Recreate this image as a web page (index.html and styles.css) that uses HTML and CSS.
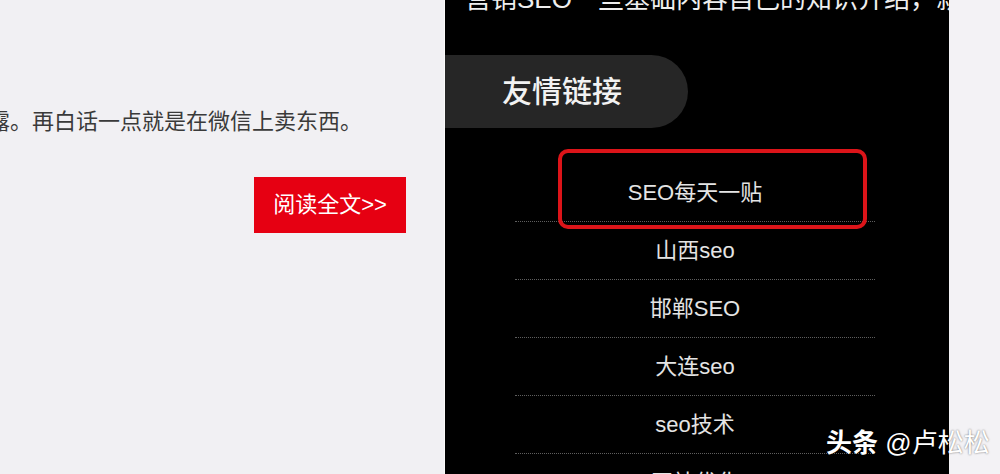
FILE: index.html
```html
<!DOCTYPE html>
<html lang="zh-CN">
<head>
    <meta charset="UTF-8">
    <meta name="viewport" content="width=device-width, initial-scale=1.0">
    <title>友情链接</title>
    <link rel="stylesheet" href="styles.css">
</head>
<body>
<section class="article">
    <p class="excerpt">露。再白话一点就是在微信上卖东西。</p>
    <a href="#" class="read-more">阅读全文&gt;&gt;</a>
</section>

<aside class="sidebar">
    <p class="top-line">营销SEO一些基础内容自己的知识介绍，就是从</p>
    <h2 class="pill">友情链接</h2>
    <ul class="links">
        <li class="marked">SEO每天一贴</li>
        <li>山西seo</li>
        <li>邯郸SEO</li>
        <li>大连seo</li>
        <li>seo技术</li>
        <li>网站优化</li>
    </ul>
</aside>

<div class="edge"></div>

<div class="watermark"><b>头条</b> @卢松松</div>
</body>
</html>
```

FILE: styles.css
```css
* {
    margin: 0;
    padding: 0;
    box-sizing: border-box;
}
html, body {
    height: 100%;
}
body {
    display: flex;
    overflow: hidden;
    position: relative;
    background: #f3f2f5;
    font-family: "Liberation Sans", "Noto Sans CJK SC", sans-serif;
}
.article {
    width: 445px;
    flex-shrink: 0;
    background: #f1f0f3;
    display: flex;
    flex-direction: column;
    align-items: flex-end;
    overflow: hidden;
    border-right: 1px solid #fafafa;
}
.excerpt {
    align-self: flex-start;
    margin-top: 107px;
    margin-left: -12px;
    font-size: 22px;
    line-height: 30px;
    color: #3a3a3a;
    white-space: nowrap;
}
.read-more {
    margin-top: 40px;
    margin-right: 38px;
    width: 152px;
    height: 56px;
    line-height: 56px;
    text-align: center;
    background: #e60012;
    color: #fff;
    font-size: 22px;
    text-decoration: none;
}
.sidebar {
    width: 504px;
    flex-shrink: 0;
    background: #000;
    overflow: hidden;
}
.top-line {
    height: 12px;
    overflow: hidden;
    display: flex;
    align-items: flex-end;
    padding-left: 20px;
    font-size: 26px;
    line-height: 26px;
    color: #eee;
    white-space: nowrap;
}
.pill {
    margin-top: 43px;
    width: 243px;
    height: 73px;
    line-height: 73px;
    padding-left: 57px;
    background: #262626;
    border-radius: 0 37px 37px 0;
    color: #f2f2f2;
    font-size: 30px;
    font-weight: 500;
}
.links {
    list-style: none;
    margin: 36px 0 0 70px;
    width: 360px;
}
.links li {
    height: 58px;
    line-height: 58px;
    text-align: center;
    font-size: 22px;
    color: #e4e4e4;
    border-bottom: 1px dotted #5e5e5e;
}
.links li.marked {
    position: relative;
}
.links li.marked::after {
    content: "";
    box-sizing: border-box;
    position: absolute;
    left: 43px;
    top: -15px;
    width: 309px;
    height: 80px;
    border: 4px solid #dc1419;
    border-radius: 10px;
}
.edge {
    flex: 1;
    background: #f3f2f5;
}
.watermark {
    position: absolute;
    left: 826px;
    top: 427px;
    font-size: 26px;
    line-height: 32px;
    color: #fff;
    text-shadow: 0 0 2px rgba(0, 0, 0, 0.6);
    white-space: nowrap;
}
.watermark b {
    font-weight: 700;
}
```
